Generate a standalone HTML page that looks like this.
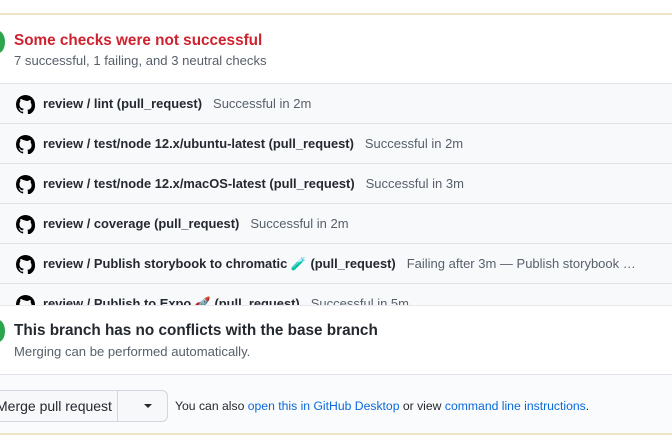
<!DOCTYPE html>
<html><head><style>
body{margin:0;width:672px;height:448px;overflow:hidden;background:#fff;font-family:"Liberation Sans",sans-serif;position:relative}
.top{position:absolute;left:0;right:0;top:13px;height:2px;background:#eee4c6}
.bot{position:absolute;left:0;right:0;top:433px;height:2px;background:#eee4c6}
.dot{position:absolute;left:-8px;width:13px;height:22px;border-radius:50%;background:#2da44e}
.h{position:absolute;left:14px;font-weight:bold;font-size:15.3px}
.s{position:absolute;left:14px;font-size:13.1px;color:#57606a}
.rows{position:absolute;left:0;right:0;top:83px;height:222px;overflow:hidden;background:#f8f9fb}
.row{height:39px;border-top:1px solid #dfe3e8;position:relative;font-size:12.9px;white-space:nowrap}
.row svg{position:absolute;left:16px;top:11px}
.row b{position:absolute;left:43px;top:12px;color:#24292f}
.row span{color:#57606a;font-weight:normal;margin-left:11px;font-size:13px}
.mid{position:absolute;left:0;right:0;top:305px;height:69px;background:#fff;border-top:1px solid #e6e8eb}
.merge{position:absolute;left:0;right:0;top:374px;height:59px;border-top:1px solid #e1e4e8;background:#fafbfc}
.btn{position:absolute;left:-10px;top:15px;width:176px;height:30px;border:1px solid #d0d7de;border-radius:6px;background:#f6f8fa;font-size:14px;color:#24292f}
a{color:#0969da;text-decoration:none}
</style></head><body>
<svg width="0" height="0" style="position:absolute"><defs><path id="gh" fill="#000" d="M8 0C3.580 0 0 3.58 0 8c0 3.54 2.29 6.53 5.47 7.59.4.07.55-.17.55-.38v-1.33c-2.23.48-2.7-1.07-2.7-1.07-.36-.92-.89-1.17-.89-1.17-.73-.5.06-.49.06-.49.8.06 1.23.83 1.23.83.71 1.22 1.87.87 2.33.66.07-.52.28-.87.51-1.07-1.78-.2-3.64-.89-3.64-3.95 0-.87.31-1.59.82-2.15-.08-.2-.36-1.02.08-2.12 0 0 .67-.21 2.2.82A7.6 7.6 0 0 1 8 4.8c.68 0 1.36.09 2 .27 1.53-1.04 2.2-.82 2.2-.82.44 1.1.16 1.92.08 2.12.51.56.82 1.27.82 2.15 0 3.07-1.87 3.75-3.65 3.95.29.25.54.73.54 1.48v2.2c0 .21.15.46.55.38A8.01 8.01 0 0 0 16 8c0-4.420-3.58-8-8-8z"/></defs></svg>
<div class="top"></div>
<div class="dot" style="top:31px"></div>
<div class="h" style="top:32px;color:#cf222e">Some checks were not successful</div>
<div class="s" style="top:53px">7 successful, 1 failing, and 3 neutral checks</div>
<div class="rows">
<div class="row"><svg width="19" height="19" viewBox="0 0 16 16"><use href="#gh"/></svg><b>review / lint (pull_request)<span>Successful in 2m</span></b></div>
<div class="row"><svg width="19" height="19" viewBox="0 0 16 16"><use href="#gh"/></svg><b>review / test/node 12.x/ubuntu-latest (pull_request)<span>Successful in 2m</span></b></div>
<div class="row"><svg width="19" height="19" viewBox="0 0 16 16"><use href="#gh"/></svg><b>review / test/node 12.x/macOS-latest (pull_request)<span>Successful in 3m</span></b></div>
<div class="row"><svg width="19" height="19" viewBox="0 0 16 16"><use href="#gh"/></svg><b>review / coverage (pull_request)<span>Successful in 2m</span></b></div>
<div class="row"><svg width="19" height="19" viewBox="0 0 16 16"><use href="#gh"/></svg><b>review / Publish storybook to chromatic 🧪 (pull_request)<span>Failing after 3m — Publish storybook …</span></b></div>
<div class="row"><svg width="19" height="19" viewBox="0 0 16 16"><use href="#gh"/></svg><b>review / Publish to Expo 🚀 (pull_request)<span>Successful in 5m</span></b></div>
</div>
<div class="mid"></div>
<div class="dot" style="top:320px"></div>
<div class="h" style="top:322px;color:#24292f">This branch has no conflicts with the base branch</div>
<div class="s" style="top:344px">Merging can be performed automatically.</div>
<div class="merge">
<div class="btn"><span style="position:absolute;left:5px;top:7px">Merge pull request</span><div style="position:absolute;left:126px;top:0;bottom:0;border-left:1px solid #d0d7de"></div><div style="position:absolute;left:153px;top:13px;border:4px solid transparent;border-top-color:#24292f;border-bottom:0"></div></div>
<div style="position:absolute;left:175px;top:24px;font-size:12.2px;color:#24292f">You can also <a>open this in GitHub Desktop</a> or view <a>command line instructions</a>.</div>
</div>
<div class="bot"></div>
</body></html>
